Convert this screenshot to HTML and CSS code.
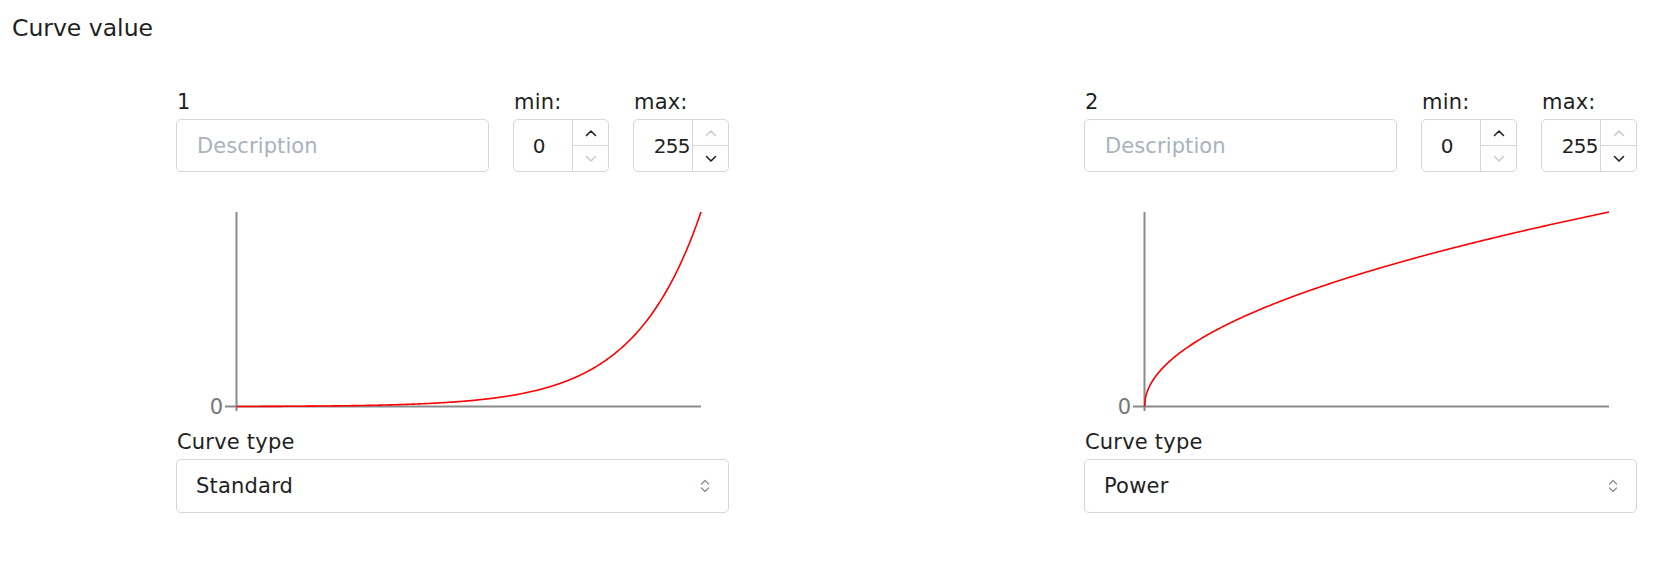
FILE: index.html
```html
<!DOCTYPE html>
<html lang="en">
<head>
<meta charset="utf-8">
<title>Curve value</title>
<link rel="stylesheet" href="styles.css">
</head>
<body>
<div class="page">
  <div class="title">Curve value</div>
  <div class="columns">
    <div class="col">
      <div class="top-row">
        <div class="field desc">
          <label class="lbl">1</label>
          <input class="text-input" type="text" placeholder="Description">
        </div>
        <div class="field num">
          <label class="lbl">min:</label>
          <div class="spin">
            <span class="spin-val">0</span>
            <div class="spin-btns">
              <span class="spin-btn"><svg class="chev" viewBox="0 0 12 8"><polyline points="1.5,6.5 6,2 10.5,6.5"/></svg></span>
              <span class="spin-btn off"><svg class="chev" viewBox="0 0 12 8"><polyline points="1.5,1.5 6,6 10.5,1.5"/></svg></span>
            </div>
          </div>
        </div>
        <div class="field num">
          <label class="lbl">max:</label>
          <div class="spin">
            <span class="spin-val wide">255</span>
            <div class="spin-btns">
              <span class="spin-btn off"><svg class="chev" viewBox="0 0 12 8"><polyline points="1.5,6.5 6,2 10.5,6.5"/></svg></span>
              <span class="spin-btn"><svg class="chev" viewBox="0 0 12 8"><polyline points="1.5,1.5 6,6 10.5,1.5"/></svg></span>
            </div>
          </div>
        </div>
      </div>
      <svg class="chart" viewBox="0 0 553 257">
        <line class="axis" x1="60.5" y1="40" x2="60.5" y2="239"/>
        <line class="axis" x1="49" y1="234.5" x2="525" y2="234.5"/>
        <text class="axis-label" x="47" y="242">0</text>
        <path class="curve" data-curve="standard" d=""/>
      </svg>
      <div class="field">
        <label class="lbl">Curve type</label>
        <div class="select">
          <span>Standard</span>
          <svg class="updown" viewBox="0 0 10 16"><polyline points="1.5,6 5,2.5 8.5,6"/><polyline points="1.5,10 5,13.5 8.5,10"/></svg>
        </div>
      </div>
    </div>

    <div class="col">
      <div class="top-row">
        <div class="field desc">
          <label class="lbl">2</label>
          <input class="text-input" type="text" placeholder="Description">
        </div>
        <div class="field num">
          <label class="lbl">min:</label>
          <div class="spin">
            <span class="spin-val">0</span>
            <div class="spin-btns">
              <span class="spin-btn"><svg class="chev" viewBox="0 0 12 8"><polyline points="1.5,6.5 6,2 10.5,6.5"/></svg></span>
              <span class="spin-btn off"><svg class="chev" viewBox="0 0 12 8"><polyline points="1.5,1.5 6,6 10.5,1.5"/></svg></span>
            </div>
          </div>
        </div>
        <div class="field num">
          <label class="lbl">max:</label>
          <div class="spin">
            <span class="spin-val wide">255</span>
            <div class="spin-btns">
              <span class="spin-btn off"><svg class="chev" viewBox="0 0 12 8"><polyline points="1.5,6.5 6,2 10.5,6.5"/></svg></span>
              <span class="spin-btn"><svg class="chev" viewBox="0 0 12 8"><polyline points="1.5,1.5 6,6 10.5,1.5"/></svg></span>
            </div>
          </div>
        </div>
      </div>
      <svg class="chart" viewBox="0 0 553 257">
        <line class="axis" x1="60.5" y1="40" x2="60.5" y2="239"/>
        <line class="axis" x1="49" y1="234.5" x2="525" y2="234.5"/>
        <text class="axis-label" x="47" y="242">0</text>
        <path class="curve" data-curve="power" d=""/>
      </svg>
      <div class="field">
        <label class="lbl">Curve type</label>
        <div class="select">
          <span>Power</span>
          <svg class="updown" viewBox="0 0 10 16"><polyline points="1.5,6 5,2.5 8.5,6"/><polyline points="1.5,10 5,13.5 8.5,10"/></svg>
        </div>
      </div>
    </div>
  </div>
</div>
<script src="script.js"></script>
</body>
</html>
```

FILE: styles.css
```css
* { box-sizing: border-box; }

body {
  margin: 0;
  background: #ffffff;
  color: #1f1f1f;
  font-family: "DejaVu Sans", "Noto Sans", sans-serif;
}

.page {
  padding: 12px 20px 0 12px;
}

.title {
  font-size: 23.5px;
  line-height: 32px;
}

.columns {
  display: flex;
  gap: 355px;
  padding-left: 164px;
  margin-top: 45px;
}

.col {
  width: 553px;
  display: flex;
  flex-direction: column;
}

.top-row {
  display: flex;
  gap: 24px;
}

.field {
  display: flex;
  flex-direction: column;
  gap: 4px;
}

.lbl {
  font-size: 21px;
  letter-spacing: 0.2px;
  line-height: 26px;
  padding-left: 1px;
}

.desc { width: 313px; }
.num { width: 96px; }

.text-input {
  width: 100%;
  height: 53px;
  border: 1px solid #d3d7dc;
  border-radius: 5px;
  padding: 0 20px;
  font-family: inherit;
  font-size: 21px;
  letter-spacing: 0.1px;
  color: #1f1f1f;
  outline: none;
  background: #fff;
}

.text-input::placeholder {
  color: #aab2bc;
}

.spin {
  height: 53px;
  border: 1px solid #d3d7dc;
  border-radius: 5px;
  display: flex;
}

.spin-val {
  flex: 1;
  display: flex;
  align-items: center;
  justify-content: center;
  padding-right: 8px;
  font-size: 20px;
}

.spin-val.wide {
  justify-content: flex-end;
  padding-right: 2px;
  letter-spacing: -0.6px;
}

.spin-btns {
  width: 36px;
  border-left: 1px solid #d3d7dc;
  display: flex;
  flex-direction: column;
}

.spin-btn {
  flex: 1;
  display: flex;
  align-items: center;
  justify-content: center;
  color: #222;
}

.spin-btn + .spin-btn {
  border-top: 1px solid #d3d7dc;
}

.spin-btn.off {
  color: #c9ced4;
}

.chev {
  width: 12px;
  height: 8px;
  fill: none;
  stroke: currentColor;
  stroke-width: 1.6;
  stroke-linecap: round;
  stroke-linejoin: round;
}

.chart {
  display: block;
  width: 553px;
  height: 257px;
}

.axis {
  stroke: #8a8a8a;
  stroke-width: 2;
}

.axis-label {
  font-family: "DejaVu Sans", sans-serif;
  font-size: 21px;
  fill: #777;
  text-anchor: end;
}

.curve {
  fill: none;
  stroke: #ff0000;
  stroke-width: 1.6;
}

.select {
  height: 54px;
  border: 1px solid #d3d7dc;
  border-radius: 5px;
  display: flex;
  align-items: center;
  justify-content: space-between;
  padding: 0 18px 0 19px;
  font-size: 21px;
  letter-spacing: 0.2px;
}

.updown {
  width: 10px;
  height: 16px;
  fill: none;
  stroke: #8a8f96;
  stroke-width: 1.3;
  stroke-linecap: round;
  stroke-linejoin: round;
}
```

FILE: script.js
```js
document.querySelectorAll('path[data-curve]').forEach(function (p) {
  var type = p.getAttribute('data-curve');
  var x0 = 60.5, x1 = 525, y0 = 234.5, y1 = 40;
  var f = type === 'power'
    ? function (t) { return Math.sqrt(t); }
    : function (t) { return (Math.exp(7 * t) - 1) / (Math.exp(7) - 1); };
  var d = '';
  for (var i = 0; i <= 400; i++) {
    var t = i / 400;
    var x = x0 + t * (x1 - x0);
    var y = y0 - f(t) * (y0 - y1);
    d += (i ? 'L' : 'M') + x.toFixed(2) + ' ' + y.toFixed(2);
  }
  p.setAttribute('d', d);
});
```
